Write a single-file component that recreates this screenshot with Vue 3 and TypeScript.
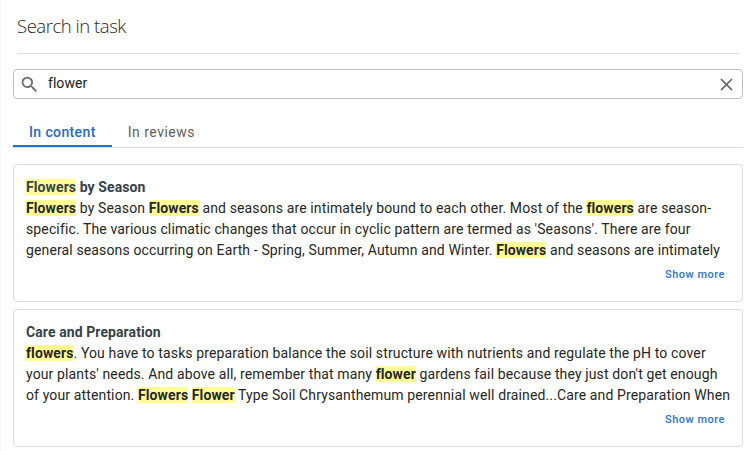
<script setup lang="ts">
import { ref } from 'vue'

interface Part { text: string; hit?: boolean }
interface Result { title: Part[]; lines: Part[][] }

const query = ref('flower')

function mark(source: string): Part[] {
  return source
    .split(/(\[[^\]]+\])/)
    .filter((s) => s.length > 0)
    .map((s) => (s[0] === '[' ? { text: s.slice(1, -1), hit: true } : { text: s }))
}

const results: Result[] = [
  {
    title: mark('[Flowers] by Season'),
    lines: [
      '[Flowers] by Season [Flowers] and seasons are intimately bound to each other. Most of the [flowers] are season-',
      "specific. The various climatic changes that occur in cyclic pattern are termed as 'Seasons'. There are four",
      'general seasons occurring on Earth - Spring, Summer, Autumn and Winter. [Flowers] and seasons are intimately',
    ].map(mark),
  },
  {
    title: mark('Care and Preparation'),
    lines: [
      '[flowers]. You have to tasks preparation balance the soil structure with nutrients and regulate the pH to cover',
      "your plants' needs. And above all, remember that many [flower] gardens fail because they just don't get enough",
      'of your attention. [Flowers] [Flower] Type Soil Chrysanthemum perennial well drained...Care and Preparation When',
    ].map(mark),
  },
]
</script>

<template>
  <main class="panel">
    <h1>Search in task</h1>
    <label class="search">
      <svg class="lens" viewBox="0 0 24 24"><path d="M15.5 14h-.79l-.28-.27A6.471 6.471 0 0 0 16 9.5 6.5 6.5 0 1 0 9.5 16c1.61 0 3.09-.59 4.23-1.57l.27.28v.79l5 4.99L20.49 19l-4.99-5zm-6 0C7.01 14 5 11.99 5 9.5S7.01 5 9.5 5 14 7.01 14 9.5 11.99 14 9.5 14z" /></svg>
      <input v-model="query" type="text" />
      <svg class="clear" viewBox="0 0 24 24"><path d="M19 6.41 17.59 5 12 10.59 6.41 5 5 6.41 10.59 12 5 17.59 6.41 19 12 13.41 17.59 19 19 17.59 13.41 12z" /></svg>
    </label>
    <nav class="tabs">
      <button class="tab active">In content</button>
      <button class="tab">In reviews</button>
    </nav>
    <article v-for="(r, i) in results" :key="i" class="card">
      <h2><span v-for="(p, k) in r.title" :key="k" :class="{ hit: p.hit }">{{ p.text }}</span></h2>
      <p v-for="(line, j) in r.lines" :key="j"><span v-for="(p, k) in line" :key="k" :class="{ hit: p.hit }">{{ p.text }}</span></p>
      <button class="more">Show more</button>
    </article>
  </main>
</template>

<style>
body { background: #fff; overflow: hidden; }
</style>

<style scoped>
.panel { box-sizing: border-box; width: 751px; height: 451px; padding: 0 8px 0 12px; border-left: 1px solid #f7f7f7; font-family: Roboto, sans-serif; color: #262626; overflow: hidden; }
h1 { box-sizing: border-box; height: 54px; margin: 0 4px 15px; padding-top: 12px; border-bottom: 1px solid #ddd; font: 300 18.5px/27px "Open Sans", sans-serif; letter-spacing: -.46px; color: #1f1f1f; }
.search { box-sizing: border-box; display: flex; align-items: center; height: 30px; padding: 0 6px 0 5px; border: 1px solid #bdbdbd; border-radius: 4px; }
.search svg { flex: none; width: 21px; height: 21px; fill: #6b6b6b; }
.search .clear { margin-right: -1px; }
input { flex: 1; min-width: 0; border: 0; outline: 0; padding: 0 0 2px 8px; background: none; font: 400 14px/20px Roboto, sans-serif; letter-spacing: .05px; color: #212121; }
.tabs { box-sizing: border-box; display: flex; height: 49px; padding-top: 17px; margin-bottom: 16px; border-bottom: 1px solid #ddd; }
button { border: 0; background: none; font-family: Roboto, sans-serif; }
.tab { box-sizing: border-box; height: 31px; padding: 1px 16px 0; font-size: 14px; font-weight: 400; letter-spacing: .5px; color: #616161; }
.tab.active { color: #1e6bd0; font-weight: 500; letter-spacing: .38px; border-bottom: 2px solid #1976d2; padding-top: 3px; }
.card { box-sizing: border-box; height: 138px; margin-bottom: 7px; padding: 12px; border: 1px solid #ddd; border-radius: 4px; }
h2, p { margin: 0; height: 21px; font-size: 14px; line-height: 21px; letter-spacing: .13px; white-space: pre; }
h2 { font-weight: 700; letter-spacing: .09px; color: #37414a; }
.hit { background: #fffd94; font-weight: 700; letter-spacing: .1px; }
.more { display: block; margin: 7px 5px 0 auto; padding: 0; font-size: 11px; line-height: 14px; font-weight: 500; letter-spacing: .5px; color: #2a74d4; }
</style>
